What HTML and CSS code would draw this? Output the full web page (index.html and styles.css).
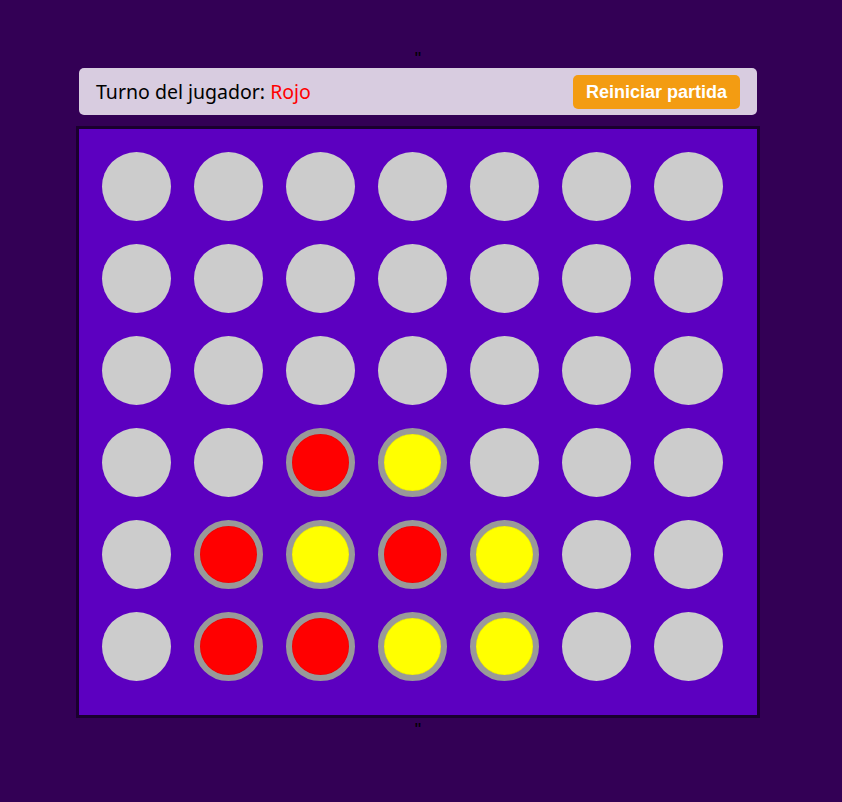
FILE: index.html
```html
<!DOCTYPE html>
<html lang="es">
<head>
<meta charset="utf-8">
<title>Conecta 4</title>
<link rel="stylesheet" href="styles.css">
</head>
<body>
<div class="page">
  <div class="quote">"</div>
  <div class="header">
    <div class="turn">Turno del jugador: <span class="player-red">Rojo</span></div>
    <button class="reset">Reiniciar partida</button>
  </div>
  <div class="board">
    <div class="cell"></div><div class="cell"></div><div class="cell"></div><div class="cell"></div><div class="cell"></div><div class="cell"></div><div class="cell"></div>
    <div class="cell"></div><div class="cell"></div><div class="cell"></div><div class="cell"></div><div class="cell"></div><div class="cell"></div><div class="cell"></div>
    <div class="cell"></div><div class="cell"></div><div class="cell"></div><div class="cell"></div><div class="cell"></div><div class="cell"></div><div class="cell"></div>
    <div class="cell"></div><div class="cell"></div><div class="cell red"></div><div class="cell yellow"></div><div class="cell"></div><div class="cell"></div><div class="cell"></div>
    <div class="cell"></div><div class="cell red"></div><div class="cell yellow"></div><div class="cell red"></div><div class="cell yellow"></div><div class="cell"></div><div class="cell"></div>
    <div class="cell"></div><div class="cell red"></div><div class="cell red"></div><div class="cell yellow"></div><div class="cell yellow"></div><div class="cell"></div><div class="cell"></div>
  </div>
  <div class="quote">"</div>
</div>
</body>
</html>
```

FILE: styles.css
```css
html, body {
  margin: 0;
  padding: 0;
  background: #330055;
  height: 100%;
}

.page {
  width: 684px;
  margin-left: 76px;
  padding-top: 47px;
}

.quote {
  font-family: "Liberation Sans", sans-serif;
  font-size: 18px;
  line-height: 24px;
  height: 20px;
  text-align: center;
  color: #000;
}

.header {
  margin: 1px 3px 11px 3px;
  height: 47px;
  box-sizing: border-box;
  background: #d8cce0;
  border-radius: 5px;
  display: flex;
  align-items: center;
  justify-content: space-between;
  padding: 0 17px;
}

.turn {
  font-family: "Noto Sans", sans-serif;
  font-size: 19.5px;
  color: #000;
}

.player-red {
  color: #ff0000;
}

.reset {
  font-family: "Liberation Sans", Arial, sans-serif;
  font-weight: bold;
  font-size: 18px;
  color: #fff;
  background: #f39c12;
  border: none;
  border-radius: 5px;
  width: 167px;
  height: 34px;
  padding: 0;
  margin-top: 1px;
}

.board {
  width: 684px;
  height: 592px;
  box-sizing: border-box;
  background: #5c00c0;
  border: 3px solid #1a002e;
  padding: 23px;
  display: grid;
  grid-template-columns: repeat(7, 69px);
  grid-auto-rows: 69px;
  gap: 23px;
}

.cell {
  width: 69px;
  height: 69px;
  border-radius: 50%;
  background: #cccccc;
  box-sizing: border-box;
}

.cell.red,
.cell.yellow {
  border: 6px solid #999999;
  box-shadow: inset 0 0 1px rgba(0, 0, 0, 0.3);
}

.cell.red {
  background: #ff0000;
}

.cell.yellow {
  background: #ffff00;
}
```
